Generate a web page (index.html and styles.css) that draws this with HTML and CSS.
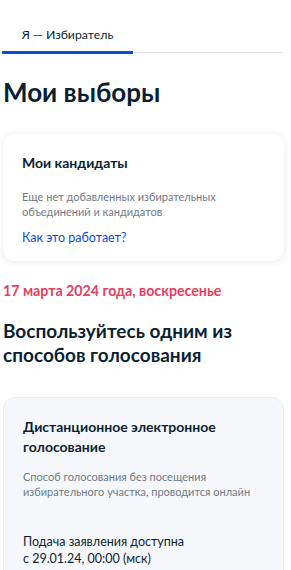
FILE: index.html
```html
<!DOCTYPE html>
<html lang="ru">
<head>
<meta charset="utf-8">
<title>Мои выборы</title>
<link rel="stylesheet" href="styles.css">
</head>
<body>
<div class="page">
  <nav class="tabs">
    <div class="tab tab-active">Я — Избиратель</div>
  </nav>
  <h1 class="title">Мои выборы</h1>
  <section class="card card-white">
    <h2 class="card-title">Мои кандидаты</h2>
    <p class="card-text">Еще нет добавленных избирательных объединений и кандидатов</p>
    <a class="link" href="#">Как это работает?</a>
  </section>
  <div class="date">17 марта 2024 года, воскресенье</div>
  <h2 class="subtitle">Воспользуйтесь одним из способов голосования</h2>
  <section class="card card-gray">
    <h3 class="card-title">Дистанционное электронное голосование</h3>
    <p class="card-text card-text-tight">Способ голосования без посещения избирательного участка, проводится онлайн</p>
    <p class="card-note">Подача заявления доступна<br>с 29.01.24, 00:00 (мск)</p>
  </section>
</div>
</body>
</html>
```
FILE: styles.css
```css
* { box-sizing: border-box; }
html, body { margin: 0; padding: 0; background: #fff; }
body {
  font-family: Lato, "Noto Sans", sans-serif;
  color: #0b1f33;
  overflow: hidden;
}
.page {
  padding: 0 7px 0 3px;
}
.tabs {
  display: flex;
  padding-top: 27px;
  border-bottom: 1px solid #dde3ed;
  margin-left: -1px;
  margin-right: 1px;
}
.tab {
  width: 131px;
  text-align: center;
  font-size: 12.3px;
  line-height: 16px;
  padding-bottom: 8px;
  color: #0b1f33;
}
.tab-active {
  border-bottom: 3px solid #0d4cd3;
  margin-bottom: -2px;
}
.title {
  margin: 22px 0 0;
  font-size: 26px;
  line-height: 34px;
  font-weight: 700;
}
.card {
  border-radius: 12px;
  padding: 19px 19px;
}
.card-white {
  margin-top: 25px;
  background: #fff;
  box-shadow: 0 1px 7px rgba(40, 70, 120, 0.1);
  padding-bottom: 14px;
}
.card-gray {
  margin-top: 30px;
  background: #f5f7fa;
  border: 1px solid #e9eef5;
}
.card-title {
  margin: 0;
  font-size: 14px;
  line-height: 20px;
  font-weight: 700;
}
.card-text {
  margin: 16px 0 0;
  font-size: 11px;
  line-height: 15px;
  color: #6f7a86;
}
.card-text-tight {
  margin-top: 12px;
}
.link {
  display: block;
  margin-top: 10px;
  font-size: 12.5px;
  line-height: 18px;
  color: #0d4cd3;
  text-decoration: none;
}
.date {
  margin-top: 21px;
  font-size: 14.2px;
  line-height: 18px;
  font-weight: 700;
  color: #e3405f;
}
.subtitle {
  margin: 19px 0 0;
  font-size: 19px;
  line-height: 24px;
  font-weight: 700;
}
.card-note {
  margin: 34px 0 0;
  font-size: 12.5px;
  line-height: 17px;
  color: #0b1f33;
}
```
